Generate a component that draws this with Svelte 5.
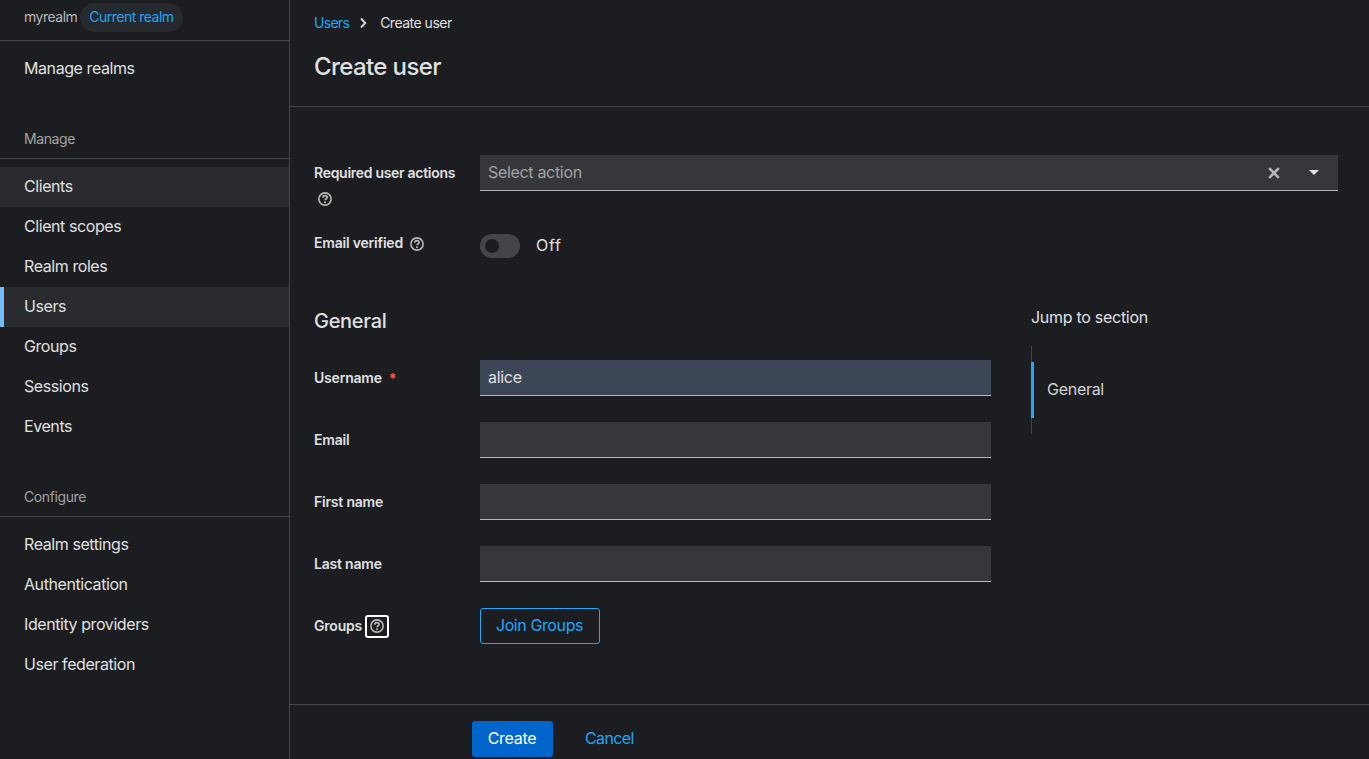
<script>
  const manage = ['Clients', 'Client scopes', 'Realm roles', 'Users', 'Groups', 'Sessions', 'Events'];
  const configure = ['Realm settings', 'Authentication', 'Identity providers', 'User federation'];
  const fields = [
    { label: 'Email' },
    { label: 'First name' },
    { label: 'Last name' }
  ];
</script>

{#snippet help(cls = '')}
  <svg class="help {cls}" viewBox="0 0 14 14" aria-hidden="true">
    <circle cx="7" cy="7" r="6.1" fill="none" stroke="currentColor" stroke-width="1.6" />
    <path d="M4.9 5.7c0-1.2.9-2 2.1-2 1.2 0 2.1.8 2.1 1.8 0 1.5-2.1 1.4-2.1 2.7" fill="none" stroke="currentColor" stroke-width="1.7" />
    <circle cx="7" cy="10.3" r="1" fill="currentColor" />
  </svg>
{/snippet}

<div class="page">
  <nav class="sidebar">
    <div class="realm">
      <span class="realm-name">myrealm</span>
      <span class="chip">Current realm</span>
    </div>
    <div class="items top"><a class="item" href="#r">Manage realms</a></div>
    <div class="group-title">Manage</div>
    <div class="items">
      {#each manage as m}
        <a class="item" class:hovered={m === 'Clients'} class:current={m === 'Users'} href="#r">{m}</a>
      {/each}
    </div>
    <div class="group-title">Configure</div>
    <div class="items">
      {#each configure as m}
        <a class="item" href="#r">{m}</a>
      {/each}
    </div>
  </nav>

  <main class="main">
    <header class="head">
      <div class="crumbs">
        <a href="#u">Users</a>
        <svg class="chev" viewBox="0 0 8 12" aria-hidden="true"><path d="M2 1.5 6.2 6 2 10.5" fill="none" stroke="currentColor" stroke-width="2" /></svg>
        <span>Create user</span>
      </div>
      <h1>Create user</h1>
    </header>

    <section class="body">
      <div class="row required">
        <div class="label wide">
          <span class="lbl">Required user actions</span>
          {@render help('under')}
        </div>
        <div class="select">
          <span class="placeholder">Select action</span>
          <svg class="clear" viewBox="0 0 12 12" aria-hidden="true"><path d="M1.2 1.2l9.6 9.6M10.8 1.2l-9.6 9.6" stroke="currentColor" stroke-width="2.6" /></svg>
          <svg class="caret" viewBox="0 0 10 5" aria-hidden="true"><path d="M0 0h10L5 5z" fill="currentColor" /></svg>
        </div>
      </div>

      <div class="row verified">
        <div class="label"><span class="lbl">Email verified</span>{@render help('side')}</div>
        <div class="switch"><span class="track"><span class="knob"></span></span><span class="off">Off</span></div>
      </div>

      <div class="columns">
        <div class="form">
          <h2>General</h2>
          <div class="field">
            <div class="label"><span class="lbl">Username</span><span class="star">*</span></div>
            <div class="input filled">alice</div>
          </div>
          {#each fields as f}
            <div class="field">
              <div class="label"><span class="lbl">{f.label}</span></div>
              <div class="input"></div>
            </div>
          {/each}
          <div class="field">
            <div class="label"><span class="lbl">Groups</span><span class="focus">{@render help()}</span></div>
            <button class="join">Join Groups</button>
          </div>
        </div>
        <aside class="jump">
          <div class="jump-title">Jump to section</div>
          <div class="jump-list"><div class="jump-item">General</div></div>
        </aside>
      </div>
    </section>

    <footer class="actions">
      <button class="create">Create</button>
      <a class="cancel" href="#c">Cancel</a>
    </footer>
  </main>
</div>

<style>
  :global(body) {
    margin: 0;
    background: #1b1d21;
    color: #e0e0e0;
    font-family: Inter, "Liberation Sans", sans-serif;
    overflow: hidden;
  }
  .page { display: flex; height: 759px; overflow: hidden; }
  a { text-decoration: none; }

  .sidebar {
    width: 289px;
    flex: none;
    border-right: 1px solid #444548;
  }
  .realm {
    height: 41px;
    box-sizing: border-box;
    border-bottom: 1px solid #444548;
    padding: 3px 0 0 24px;
    display: flex;
    align-items: flex-start;
    gap: 3px;
    font-size: 14px;
    letter-spacing: -0.5px;
  }
  .realm-name { color: #b8b8b8; line-height: 28px; }
  .chip {
    background: #26292d;
    color: #1fa7f8;
    border-radius: 15px;
    height: 29px;
    line-height: 28px;
    padding: 0 9px;
  }
  .items { display: flex; flex-direction: column; }
  .top { margin-top: 8px; }
  .item {
    height: 40px;
    line-height: 39px;
    padding-left: 24px;
    color: #e0e0e0;
    font-size: 16px;
    letter-spacing: -0.42px;
  }
  .hovered { background: #292b2f; }
  .current { background: #292b2f; box-shadow: inset 4px 0 0 #73bcf7; }
  .group-title {
    font-size: 14px;
    color: #a3a3a3;
    padding-left: 24px;
    border-bottom: 1px solid #444548;
    box-sizing: border-box;
    height: 30px;
    line-height: 20px;
    margin: 40px 0 8px;
    letter-spacing: -0.4px;
  }

  .main { flex: 1; min-width: 0; display: flex; flex-direction: column; }
  .head {
    height: 106px;
    border-bottom: 1px solid #444548;
    padding-left: 24px;
  }
  .crumbs {
    display: flex;
    align-items: center;
    height: 20px;
    padding-top: 12px;
    font-size: 14px;
    color: #e0e0e0;
    letter-spacing: -0.5px;
  }
  .crumbs a { color: #1fa7f8; letter-spacing: -0.7px; }
  .chev { width: 8px; height: 12px; margin: 1px 13px 0 10px; color: #d2d2d2; }
  h1 { margin: 0; padding-top: 18px; font-size: 24px; line-height: 34px; font-weight: 500; color: #e0e0e0; letter-spacing: -0.6px; }

  .body { flex: 1; padding: 48px 31px 0 24px; }
  .row { display: flex; }
  .label { width: 166px; flex: none; font-size: 14px; color: #e0e0e0; }
  .lbl { font-weight: 600; letter-spacing: -0.2px; }
  .required { height: 79px; }
  .wide { padding-top: 8px; line-height: 20px; }
  .wide .lbl { letter-spacing: -0.29px; }
  .help { width: 14px; height: 14px; color: #b8b8b8; display: block; }
  .under { margin: 9px 0 0 4px; }
  .select {
    flex: 1;
    height: 36px;
    box-sizing: border-box;
    background: #36373a;
    border-bottom: 1px solid #b8b8b8;
    display: flex;
    align-items: center;
    padding: 0 19px 0 8px;
    font-size: 16px;
  }
  .placeholder { flex: 1; color: #a3a3a3; letter-spacing: -0.32px; padding-bottom: 2px; }
  .clear { width: 12px; height: 12px; color: #b8b8b8; margin-right: 29px; }
  .caret { width: 10px; height: 5px; color: #e0e0e0; }

  .verified { height: 72px; }
  .verified .label { display: flex; align-items: flex-start; gap: 7px; line-height: 18px; }
  .verified .help { margin-top: 3px; }
  .switch { display: flex; align-items: center; height: 24px; font-size: 16px; }
  .track {
    width: 40px;
    height: 24px;
    border-radius: 12px;
    background: #444548;
    display: flex;
    align-items: center;
    padding-left: 5px;
    box-sizing: border-box;
  }
  .knob { width: 14px; height: 14px; border-radius: 50%; background: #1b1d21; }
  .off { margin-left: 16px; color: #e0e0e0; letter-spacing: 0.7px; padding-bottom: 2px; }

  .columns { display: flex; }
  .form { width: 677px; flex: none; }
  h2 { margin: 0 0 24px; font-size: 20px; line-height: 30px; font-weight: 500; color: #e0e0e0; letter-spacing: -0.3px; }
  .field { display: flex; align-items: center; margin-bottom: 26px; height: 36px; }
  .field .label { display: flex; align-items: center; }
  .field .lbl { line-height: 18px; margin-bottom: 1px; }
  .input {
    flex: 1;
    height: 36px;
    box-sizing: border-box;
    background: #36373a;
    border-bottom: 1px solid #b8b8b8;
    padding: 0 8px;
    font-size: 16px;
    line-height: 35px;
    color: #e0e0e0;
    letter-spacing: -0.3px;
  }
  .input.filled { background: #3d4656; }
  .star { color: #fe5142; margin-left: 7px; font-weight: 700; }
  .focus {
    display: flex;
    align-items: center;
    justify-content: center;
    width: 20px;
    height: 19px;
    border: 2px solid #fff;
    border-radius: 3px;
    margin-left: 3px;
  }
  .join {
    height: 36px;
    width: 120px;
    background: transparent;
    border: 1px solid #1fa7f8;
    border-radius: 3px;
    color: #1fa7f8;
    font: inherit;
    font-size: 16px;
    letter-spacing: -0.4px;
    padding: 0 1px 2px 0;
  }
  .jump { margin-left: 40px; width: 300px; }
  .jump-title { font-size: 16px; line-height: 22px; color: #e0e0e0; letter-spacing: -0.28px; }
  .jump-list {
    margin-top: 18px;
    height: 88px;
    border-left: 1px solid #444548;
    padding: 16px 0;
    box-sizing: border-box;
  }
  .jump-item {
    height: 56px;
    line-height: 54px;
    margin-left: -1px;
    padding-left: 13px;
    border-left: 3px solid #1fa7f8;
    font-size: 16px;
    color: #d2d2d2;
    letter-spacing: -0.28px;
  }

  .actions {
    border-top: 1px solid #444548;
    box-sizing: border-box;
    height: 55px;
    flex: none;
    padding: 16px 0 0 182px;
    display: flex;
    align-items: flex-start;
    gap: 32px;
  }
  .create {
    width: 81px;
    height: 36px;
    border: 0;
    border-radius: 3px;
    background: #0066cc;
    color: #fff;
    font: inherit;
    font-size: 16px;
    letter-spacing: -0.3px;
    padding: 0 1px 2px 0;
  }
  .cancel { color: #1fa7f8; font-size: 16px; line-height: 34px; letter-spacing: -0.6px; }
</style>
